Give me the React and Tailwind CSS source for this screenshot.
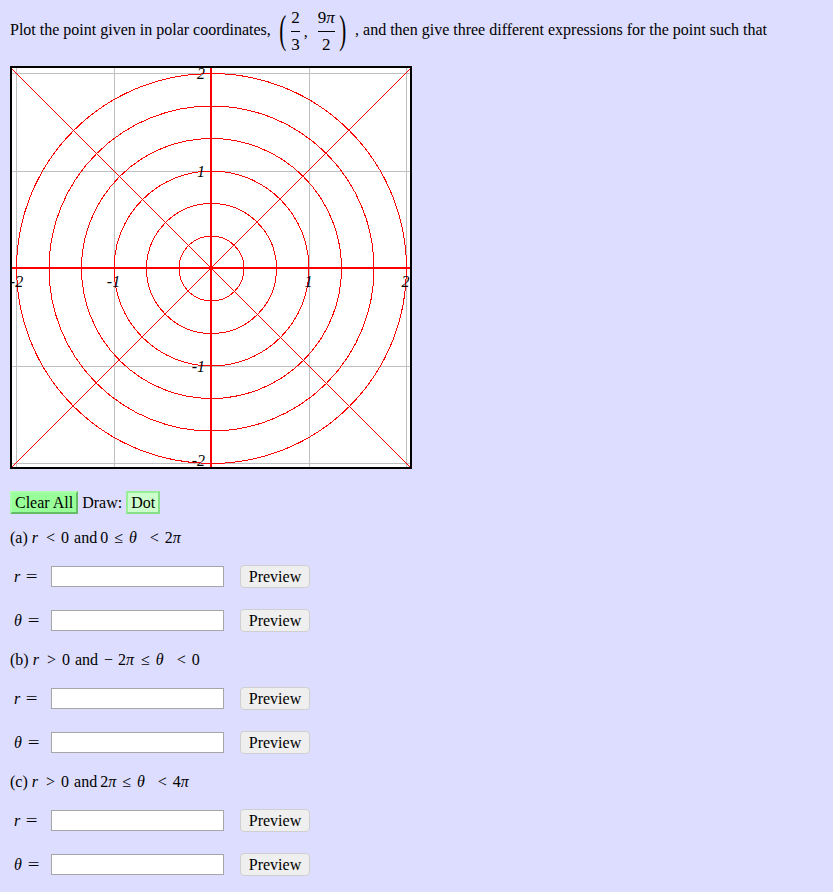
import React from "react";

const CX = 211;
const CY = 268;
const U = 97.5;

function Graph() {
  const grid = [-2, -1, 1, 2];
  const circles = [1, 2, 3, 4, 5, 6];
  return (
    <svg
      width="402"
      height="403"
      viewBox="10 66 402 403"
      className="block"
    >
      <rect x="10" y="66" width="402" height="403" fill="#ffffff" />
      <g shapeRendering="crispEdges" stroke="#c0c0c0" strokeWidth="1">
        {grid.map((k) => (
          <line key={"v" + k} x1={CX + k * U + 0.5} y1="67" x2={CX + k * U + 0.5} y2="468" />
        ))}
        {grid.map((k) => (
          <line key={"h" + k} x1="11" y1={CY - k * U + 0.5} x2="411" y2={CY - k * U + 0.5} />
        ))}
      </g>
      <g shapeRendering="crispEdges" stroke="#ff0000" fill="none" strokeWidth="1">
        {circles.map((c) => (
          <circle key={c} cx={CX + 0.5} cy={CY + 0.5} r={(c * U) / 3} />
        ))}
        <line x1="11" y1="68" x2="411" y2="468" />
        <line x1="11" y1="468" x2="411" y2="68" />
        <line x1={CX} y1="67" x2={CX} y2="468" strokeWidth="2" />
        <line x1="11" y1={CY} x2="411" y2={CY} strokeWidth="2" />
      </g>
      <g
        fontFamily="'Liberation Serif', 'Times New Roman', serif"
        fontStyle="italic"
        fontSize="16"
        fill="#000"
      >
        <text x="205" y="79" textAnchor="end">2</text>
        <text x="205" y="177" textAnchor="end">1</text>
        <text x="205" y="372" textAnchor="end">-1</text>
        <text x="205" y="466" textAnchor="end">-2</text>
        <text x="16.5" y="287" textAnchor="middle">-2</text>
        <text x="113.5" y="287" textAnchor="middle">-1</text>
        <text x="308.5" y="287" textAnchor="middle">1</text>
        <text x="405.5" y="287" textAnchor="middle">2</text>
      </g>
      <rect x="11" y="67" width="400" height="401" fill="none" stroke="#000" strokeWidth="2" shapeRendering="crispEdges" />
    </svg>
  );
}

function I({ children, className = "" }) {
  return <span className={"italic " + className}>{children}</span>;
}

function Row({ sym }) {
  return (
    <div className="flex items-center h-[23px]">
      <div className="w-[41px] pl-[4px] flex items-center">
        {sym}
        <span className="ml-[7px] inline-block scale-x-[1.3]">=</span>
      </div>
      <div className="w-[173px] h-[21px] border border-[#a6a6a6] bg-white" />
      <button className="ml-[16px] w-[70px] h-[23px] bg-[#efefef] border border-[#cfcfcf] rounded-[4px] text-[16px] leading-none text-black flex items-center justify-center">
        Preview
      </button>
    </div>
  );
}

export default function App() {
  return (
    <div className="min-h-[892px] w-full bg-[#ddddff] text-[16px] text-black px-[10px] font-['Liberation_Serif','Times_New_Roman','DejaVu_Serif',serif]">
      <div className="h-[66px] pt-[9px] whitespace-nowrap">
        <span>Plot the point given in polar coordinates, </span>
        <span className="inline-flex items-center align-middle ml-[3px] mr-[4px]">
          <span className="inline-block text-[28px] leading-none scale-y-[1.42] scale-x-[0.75] -translate-y-[1px]">(</span>
          <span className="inline-flex flex-col items-center px-[1px] ml-[3px] text-[17px]">
            <span className="leading-none">2</span>
            <span className="h-px w-full bg-black mt-[5px] mb-[4px]" />
            <span className="leading-none">3</span>
          </span>
          <span className="self-end mb-[9px] ml-[3px] mr-[9px]">,</span>
          <span className="inline-flex flex-col items-center px-[1px] text-[17px]">
            <span className="leading-none">9<I>π</I></span>
            <span className="h-px w-full bg-black mt-[5px] mb-[4px]" />
            <span className="leading-none">2</span>
          </span>
          <span className="inline-block text-[28px] leading-none scale-y-[1.42] scale-x-[0.75] -translate-y-[1px] ml-[2px]">)</span>
        </span>
        <span> , and then give three different expressions for the point such that</span>
      </div>

      <Graph />

      <div className="mt-[22px] flex items-center h-[23px] gap-[4px]">
        <button className="h-[23px] px-[3px] bg-[#99ff99] border-2 border-t-[#aaffaa] border-l-[#aaffaa] border-b-[#66bb66] border-r-[#66bb66] leading-[19px] text-black">
          Clear All
        </button>
        <span>Draw:</span>
        <button className="h-[23px] px-[3px] bg-[#ccffcc] border-2 border-t-[#99ee99] border-l-[#99ee99] border-b-[#88dd88] border-r-[#88dd88] leading-[19px] text-black">
          Dot
        </button>
      </div>

      {/* (a) */}
      <div className="mt-[14px] h-[20px] flex items-center whitespace-nowrap">
        <span>(a)</span>
        <I className="ml-[4px]">r</I>
        <span className="ml-[8px]">&lt;</span>
        <span className="ml-[6px]">0</span>
        <span className="ml-[5px]">and</span>
        <span className="ml-[3px]">0</span>
        <span className="ml-[6px]">≤</span>
        <I className="ml-[6px]">θ</I>
        <span className="ml-[13px]">&lt;</span>
        <span className="ml-[6px]">2<I>π</I></span>
      </div>
      <div className="mt-[17px]"><Row sym={<I>r</I>} /></div>
      <div className="mt-[21px]"><Row sym={<I>θ</I>} /></div>

      {/* (b) */}
      <div className="mt-[18px] h-[20px] flex items-center whitespace-nowrap">
        <span>(b)</span>
        <I className="ml-[4px]">r</I>
        <span className="ml-[8px]">&gt;</span>
        <span className="ml-[6px]">0</span>
        <span className="ml-[5px]">and</span>
        <span className="ml-[6px]">−</span>
        <span className="ml-[5px]">2<I>π</I></span>
        <span className="ml-[7px]">≤</span>
        <I className="ml-[6px]">θ</I>
        <span className="ml-[13px]">&lt;</span>
        <span className="ml-[6px]">0</span>
      </div>
      <div className="mt-[17px]"><Row sym={<I>r</I>} /></div>
      <div className="mt-[21px]"><Row sym={<I>θ</I>} /></div>

      {/* (c) */}
      <div className="mt-[18px] h-[20px] flex items-center whitespace-nowrap">
        <span>(c)</span>
        <I className="ml-[4px]">r</I>
        <span className="ml-[8px]">&gt;</span>
        <span className="ml-[6px]">0</span>
        <span className="ml-[5px]">and</span>
        <span className="ml-[3px]">2<I>π</I></span>
        <span className="ml-[6px]">≤</span>
        <I className="ml-[6px]">θ</I>
        <span className="ml-[13px]">&lt;</span>
        <span className="ml-[6px]">4<I>π</I></span>
      </div>
      <div className="mt-[17px]"><Row sym={<I>r</I>} /></div>
      <div className="mt-[21px]"><Row sym={<I>θ</I>} /></div>
    </div>
  );
}
